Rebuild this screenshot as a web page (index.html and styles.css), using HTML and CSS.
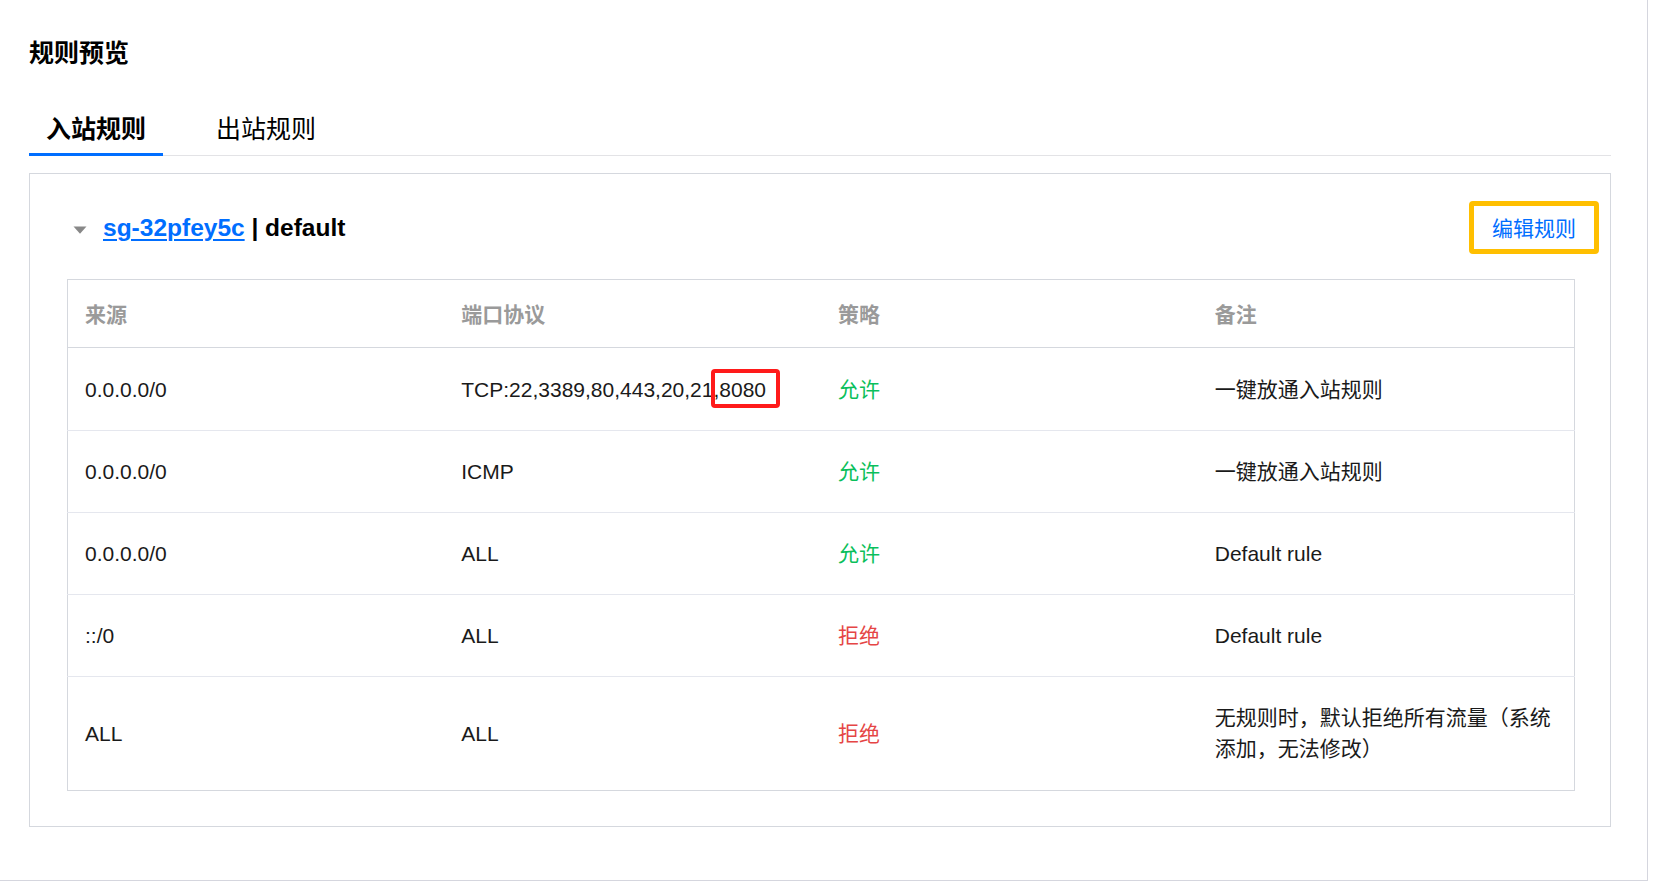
FILE: index.html
```html
<!DOCTYPE html>
<html lang="zh-CN">
<head>
<meta charset="utf-8">
<title>规则预览</title>
<link rel="stylesheet" href="styles.css">
</head>
<body>
<div class="panel">
  <h2 class="title">规则预览</h2>
  <div class="tabs">
    <div class="tab active">入站规则</div>
    <div class="tab">出站规则</div>
  </div>
  <div class="box">
    <div class="box-head">
      <div class="group-name">
        <svg class="caret" width="14" height="8" viewBox="0 0 14 8"><polygon points="0.5,0.5 13.5,0.5 7,7.8" fill="#888"/></svg>
        <a class="sg-link" href="#">sg-32pfey5c</a><span class="sg-name">&nbsp;| default</span>
      </div>
      <div class="edit-btn">编辑规则</div>
    </div>
    <table class="rules">
      <thead>
        <tr><th>来源</th><th>端口协议</th><th>策略</th><th>备注</th></tr>
      </thead>
      <tbody>
        <tr><td>0.0.0.0/0</td><td>TCP:22,3389,80,443,20,21,<span class="mark">8080</span></td><td class="allow">允许</td><td>一键放通入站规则</td></tr>
        <tr><td>0.0.0.0/0</td><td>ICMP</td><td class="allow">允许</td><td>一键放通入站规则</td></tr>
        <tr><td>0.0.0.0/0</td><td>ALL</td><td class="allow">允许</td><td>Default rule</td></tr>
        <tr><td>::/0</td><td>ALL</td><td class="deny">拒绝</td><td>Default rule</td></tr>
        <tr><td>ALL</td><td>ALL</td><td class="deny">拒绝</td><td>无规则时，默认拒绝所有流量（系统添加，无法修改）</td></tr>
      </tbody>
    </table>
  </div>
</div>
</body>
</html>
```
FILE: styles.css
```css
* { box-sizing: border-box; }
html, body { margin: 0; padding: 0; background: #fff; }
body {
  font-family: "Liberation Sans", "Noto Sans CJK SC", sans-serif;
  color: #1a1a1a;
}
.panel {
  width: 1648px;
  height: 881px;
  border-right: 1px solid #d5d6de;
  border-bottom: 1px solid #d5d6de;
  padding: 37px 36px 0 29px;
}
.title {
  margin: 0;
  font-size: 25px;
  line-height: 32px;
  font-weight: 700;
  color: #000;
}
.tabs {
  display: flex;
  margin-top: 44px;
  border-bottom: 1px solid #e3e3e6;
}
.tab {
  position: relative;
  font-size: 25px;
  line-height: 32px;
  padding: 0 17px 10px;
  margin-right: 36px;
  color: #000;
}
.tab.active { font-weight: 700; }
.tab.active::after {
  content: "";
  position: absolute;
  left: 0;
  right: 0;
  bottom: -1px;
  height: 3px;
  background: #006eff;
}
.box {
  margin-top: 17px;
  border: 1px solid #d5d8de;
  padding: 27px 0 35px;
}
.box-head {
  display: flex;
  align-items: center;
  justify-content: space-between;
  height: 53px;
  padding: 0 11px 0 43px;
  margin-bottom: 25px;
}
.group-name {
  display: flex;
  align-items: center;
  font-size: 24.5px;
  line-height: 32px;
  font-weight: 700;
}
.caret { margin-right: 16px; margin-top: 4px; }
.sg-link {
  color: #006eff;
  text-decoration: underline;
  text-decoration-thickness: 2px;
  text-underline-offset: 3px;
}
.sg-name { color: #000; }
.edit-btn {
  width: 130px;
  height: 53px;
  border: 5px solid #ffbf00;
  border-radius: 4px;
  display: flex;
  align-items: center;
  justify-content: center;
  padding-bottom: 2px;
  color: #006eff;
  font-size: 21px;
}
.rules {
  width: calc(100% - 72px);
  margin: 0 35px 0 37px;
  border-collapse: collapse;
  table-layout: fixed;
  border: 1px solid #d5d8de;
  font-size: 21px;
}
.rules th {
  text-align: left;
  font-weight: 700;
  color: #9a9a9a;
  line-height: 30px;
  padding: 20px 17px 17px;
  border-bottom: 1px solid #d5d8de;
}
.rules td {
  line-height: 31px;
  padding: 25px 17px;
  border-top: 1px solid #e5e7ee;
  vertical-align: middle;
}
.rules tbody tr:first-child td { padding-top: 26px; }
.rules tbody tr:last-child td { padding-bottom: 26px; }
.rules td.allow { color: #0abf5b; }
.rules td.deny { color: #e54545; }
.mark { position: relative; }
.mark::after {
  content: "";
  position: absolute;
  left: -8px;
  right: -14px;
  top: -9px;
  bottom: -7px;
  border: 4px solid #ff1a1a;
  border-radius: 4px;
}
```
